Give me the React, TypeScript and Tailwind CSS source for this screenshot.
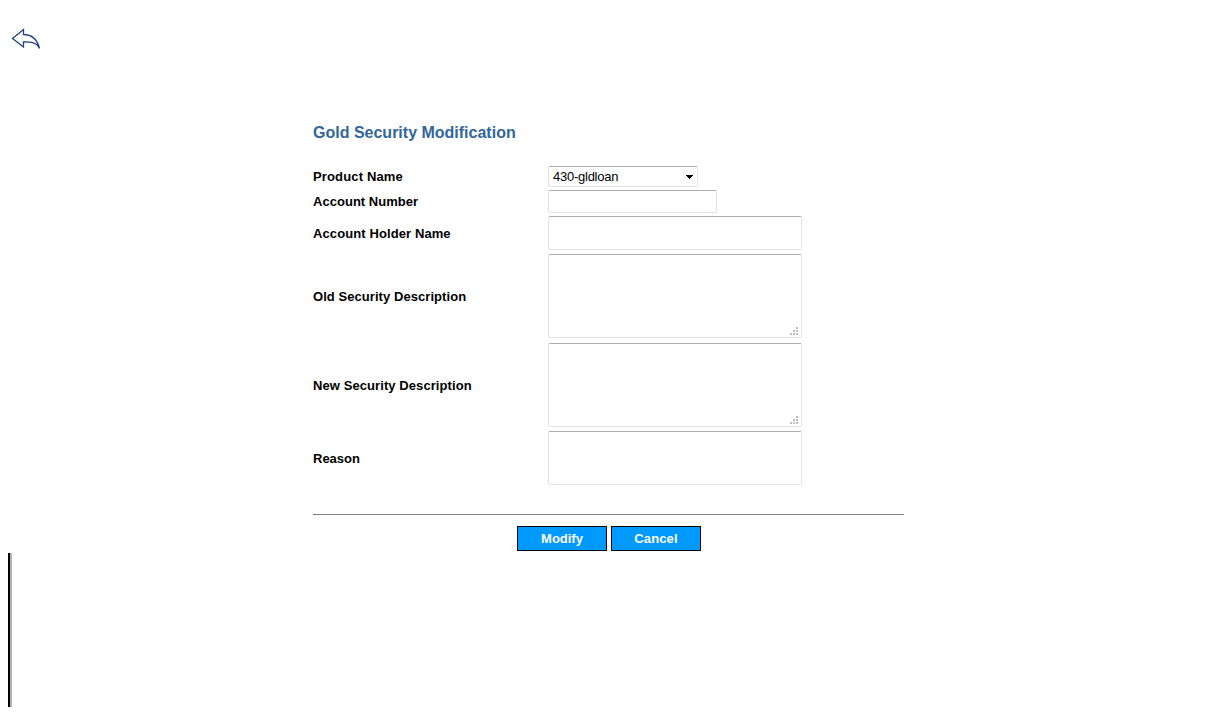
import React from "react";

const field =
  "block resize-none rounded-[2px] border border-[#e2e3ea] border-t-[#abadb3] bg-white outline-none";

function Grip() {
  return (
    <svg
      className="pointer-events-none absolute right-[3px] bottom-[2px]"
      width="9"
      height="9"
      shapeRendering="crispEdges"
      fill="#bdbdbd"
    >
      <path d="M6 0h2v2h-2zM3 3h2v2h-2zM6 3h2v2h-2zM0 6h2v2h-2zM3 6h2v2h-2zM6 6h2v2h-2z" />
    </svg>
  );
}

function Row({
  label,
  labelClass,
  className,
  children,
}: {
  label: string;
  labelClass: string;
  className: string;
  children: React.ReactNode;
}) {
  return (
    <div className={`flex items-center ${className}`}>
      <div className={`w-[235px] shrink-0 whitespace-nowrap text-[13px] leading-4 font-bold text-black ${labelClass}`}>
        {label}
      </div>
      <div className="relative">{children}</div>
    </div>
  );
}

export default function App() {
  return (
    <div className="flex h-[723px] w-full overflow-hidden bg-white font-['Liberation_Sans',Arial,sans-serif]">
      <div className="flex w-[313px] shrink-0 flex-col justify-between pt-[28px] pb-[16px]">
        <svg
          className="ml-[11px]"
          width="30"
          height="22"
          fill="none"
          stroke="#1c3f86"
          strokeWidth="1.3"
          strokeLinejoin="miter"
          aria-label="Back"
        >
          <path d="M1.5 10.5L12.5 1.5V6.5C19 6.5 26 10 28.5 20.5C27 15.5 22 13.5 12.5 14V19Z" />
        </svg>
        <div className="ml-2 h-[154px] w-1 border-r-2 border-l-2 border-r-[#b4b4b4] border-l-black" />
      </div>

      <main className="w-[591px] pt-[123px]">
        <h1 className="h-[43px] text-[16px] leading-[20px] font-bold text-[#336699]">
          Gold Security Modification
        </h1>
        <Row label="Product Name" labelClass="tracking-[0.15px]" className="mb-[3px] h-[21px]">
          <button className={`${field} flex h-[21px] w-[150px] items-center justify-between pr-1 pl-[4px] text-black`}>
            <span className="text-[13px] leading-4 tracking-[-0.25px]">430-gldloan</span>
            <svg width="7" height="4" shapeRendering="crispEdges">
              <path d="M0 0H7V1H6V2H5V3H4V4H3V3H2V2H1V1H0Z" fill="#000" />
            </svg>
          </button>
        </Row>
        <Row label="Account Number" labelClass="tracking-[0.03px]" className="mb-[3px] h-[23px]">
          <input aria-label="Account Number" className={`${field} h-[23px] w-[169px]`} />
        </Row>
        <Row label="Account Holder Name" labelClass="pt-[2px] tracking-[0.1px]" className="mb-[4px] h-[34px]">
          <input aria-label="Account Holder Name" className={`${field} h-[34px] w-[254px]`} />
        </Row>
        <Row label="Old Security Description" labelClass="pt-[2px] tracking-[0.06px]" className="mb-[5px] h-[84px]">
          <textarea aria-label="Old Security Description" className={`${field} h-[84px] w-[254px]`} />
          <Grip />
        </Row>
        <Row label="New Security Description" labelClass="pt-[2px] tracking-[0.08px]" className="mb-[4px] h-[84px]">
          <textarea aria-label="New Security Description" className={`${field} h-[84px] w-[254px]`} />
          <Grip />
        </Row>
        <Row label="Reason" labelClass="pt-[2px] tracking-normal" className="mb-[29px] h-[54px]">
          <textarea aria-label="Reason" className={`${field} h-[54px] w-[254px]`} />
        </Row>
        <div className="mb-[11px] h-px bg-[#808080]" />
        <div className="flex gap-1 pl-[204px]">
          <button className="h-[25px] w-[90px] border border-black bg-[#0099ff] text-[13px] leading-4 font-bold text-white">
            Modify
          </button>
          <button className="h-[25px] w-[90px] border border-black bg-[#0099ff] text-[13px] leading-4 font-bold tracking-[0.15px] text-white">
            Cancel
          </button>
        </div>
      </main>
    </div>
  );
}
